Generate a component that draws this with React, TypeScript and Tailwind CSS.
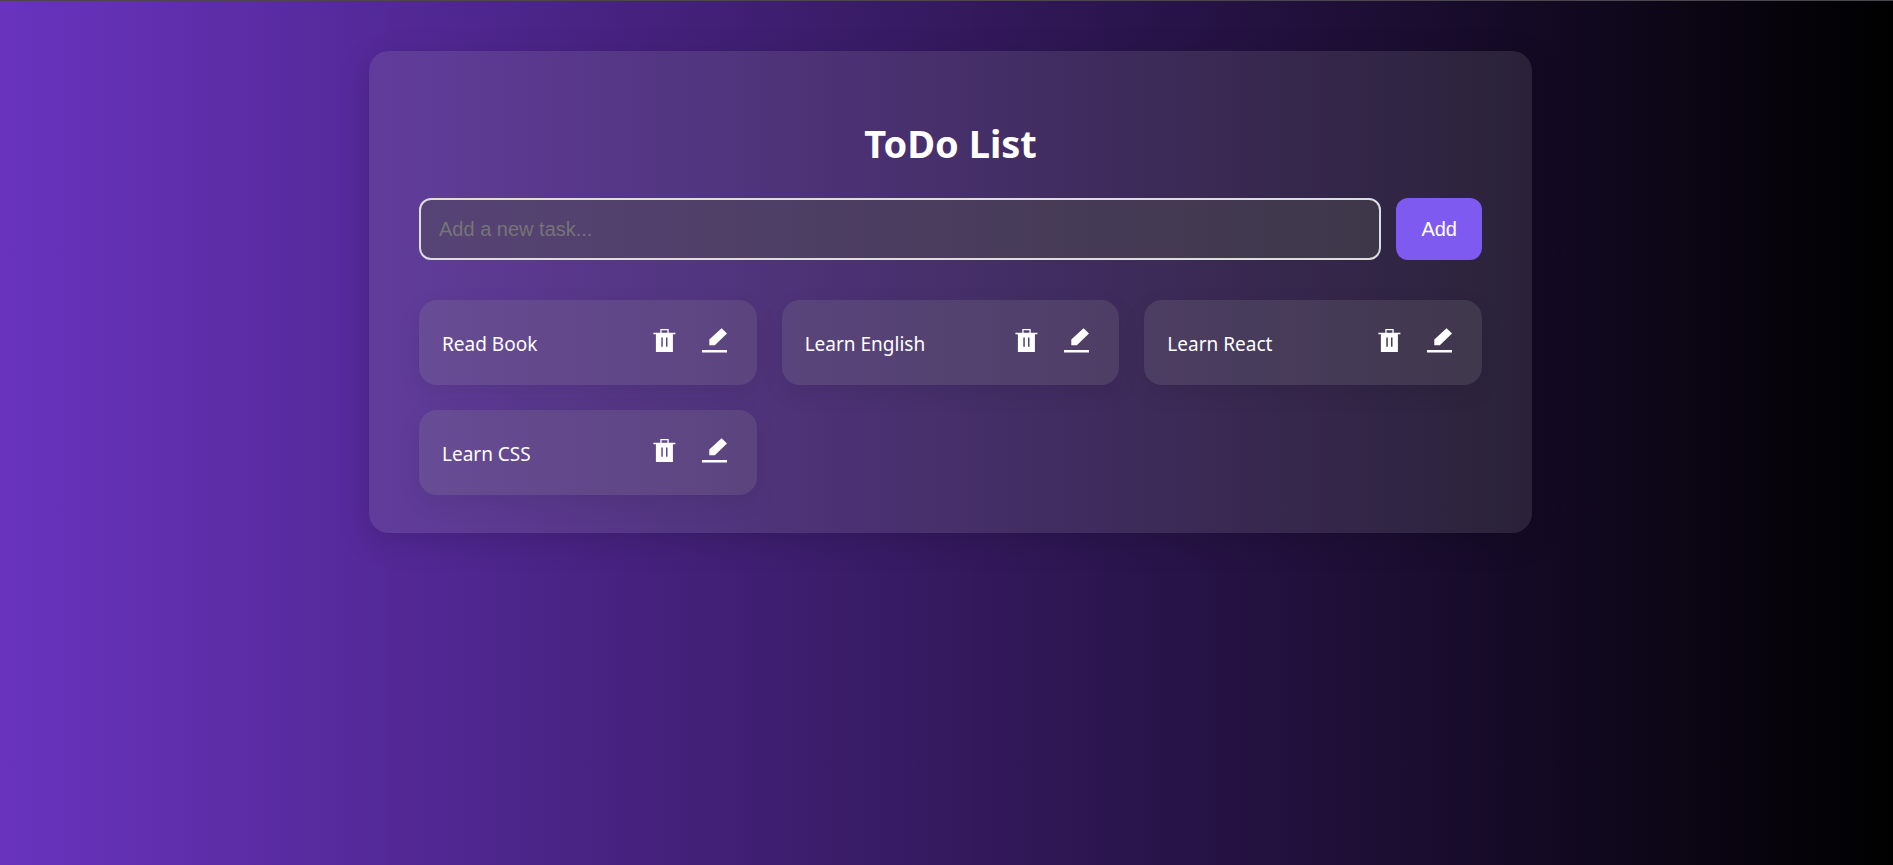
import { useState } from "react";

const initialTasks = ["Read Book", "Learn English", "Learn React", "Learn CSS"];

function TrashIcon() {
  return (
    <svg width="23" height="24" viewBox="0 0 23 24" fill="currentColor" aria-hidden="true">
      <path
        fillRule="evenodd"
        d="M7.3 0h8.4v3.8h6.7v1.4h-2.5V23h-17V5.2H.4V3.8h6.9zM8.6 1.3v2.5h5.8V1.3zM8.3 8.6v9.2h1.5V8.6zM13 8.6v9.2h1.5V8.6z"
      />
    </svg>
  );
}

function EditIcon() {
  return (
    <svg width="25" height="25" viewBox="0 0 25 25" fill="currentColor" aria-hidden="true">
      <path d="M19.6.3 25 5.6 12.8 17.2H7.3v-5.6zM0 22h25v2.6H0z" />
    </svg>
  );
}

export default function App() {
  const [tasks, setTasks] = useState(initialTasks);
  const [draft, setDraft] = useState("");

  const addTask = () => {
    const text = draft.trim();
    if (!text) return;
    setTasks([...tasks, text]);
    setDraft("");
  };

  const removeTask = (index: number) => setTasks(tasks.filter((_, i) => i !== index));

  const editTask = (index: number) => {
    setDraft(tasks[index]);
    removeTask(index);
  };

  return (
    <div className="min-h-screen border-t border-[#4a474f] bg-linear-to-r/srgb from-[#6933be] to-black bg-origin-border pt-[50px] pl-2 font-['Noto_Sans','Open_Sans',sans-serif] text-white">
      <main className="mx-auto w-full max-w-[1163px] rounded-[20px] bg-[#acacac]/15 px-[50px] pt-16 pb-[38px] shadow-[0_8px_32px_rgba(0,0,0,0.15)]">
        <h1 className="text-center text-[38px] leading-[56px] font-bold">ToDo List</h1>
        <form
          className="mt-[27px] flex gap-[15px]"
          onSubmit={(e) => {
            e.preventDefault();
            addTask();
          }}
        >
          <input
            type="text"
            aria-label="New task"
            placeholder="Add a new task..."
            value={draft}
            onChange={(e) => setDraft(e.target.value)}
            className="h-[62px] min-w-0 flex-1 rounded-xl border-2 border-[#dddddd] bg-[#4e4e4e]/45 px-[18px] font-['Liberation_Sans',Arial,sans-serif] text-xl text-white outline-none placeholder:text-[#757575]"
          />
          <button
            type="submit"
            className="h-[62px] rounded-xl bg-[#7f5af0] px-[25px] font-['Liberation_Sans',Arial,sans-serif] text-xl"
          >
            Add
          </button>
        </form>
        <ul className="mt-10 grid grid-cols-1 gap-[25px] md:grid-cols-2 lg:grid-cols-3">
          {tasks.map((task, index) => (
            <li
              key={index}
              className="flex h-[85px] items-center justify-between rounded-[18px] bg-[#8c8c8c]/20 pr-[30px] pl-[23px] shadow-[0_8px_24px_rgba(0,0,0,0.08)]"
            >
              <span className="pt-0.5 text-[19px] leading-7">{task}</span>
              <span className="flex items-center gap-[26px] pb-1">
                <button type="button" aria-label={`Delete ${task}`} onClick={() => removeTask(index)}>
                  <TrashIcon />
                </button>
                <button type="button" aria-label={`Edit ${task}`} onClick={() => editTask(index)}>
                  <EditIcon />
                </button>
              </span>
            </li>
          ))}
        </ul>
      </main>
    </div>
  );
}
